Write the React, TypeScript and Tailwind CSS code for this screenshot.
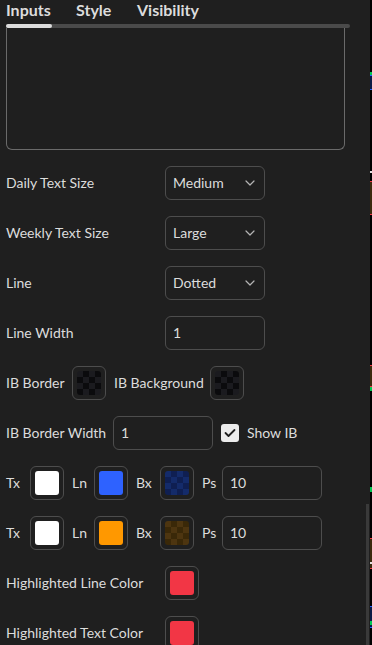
import React from 'react'

const font = { fontFamily: 'Lato, "Noto Sans", sans-serif' }

function Chevron() {
  return (
    <svg width="10" height="6" viewBox="0 0 10 6" fill="none" className="shrink-0">
      <polyline points="1,1 5,5 9,1" stroke="#b4b4b4" strokeWidth="1.2" strokeLinecap="round" strokeLinejoin="round" />
    </svg>
  )
}

function Select({ value }: { value: string }) {
  return (
    <div className="flex h-[34px] w-[100px] items-center justify-between rounded-md border border-[#4d4d4d] pl-[7px] pr-[9px] text-[14px] text-[#dcdcdc]">
      <span>{value}</span>
      <Chevron />
    </div>
  )
}

function TextInput({ value }: { value: string }) {
  return (
    <div className="flex h-[34px] w-[100px] shrink-0 items-center rounded-md border border-[#4d4d4d] pl-[7px] text-[14px] text-[#dcdcdc]">
      {value}
    </div>
  )
}

const SWATCH_FILL: Record<string, string> = {
  white: 'bg-white',
  blue: 'bg-[#2e62ff]',
  orange: 'bg-[#ff9800]',
  red: 'bg-[#f23645]',
  dark: 'bg-[conic-gradient(#0b0b0d_25%,#1b1b1f_0_50%,#0b0b0d_0_75%,#1b1b1f_0)] bg-[length:12px_12px]',
  navy: 'bg-[conic-gradient(#0f1f52_25%,#142b6a_0_50%,#0f1f52_0_75%,#142b6a_0)] bg-[length:12px_12px]',
  brown: 'bg-[conic-gradient(#3a2808_25%,#4d3510_0_50%,#3a2808_0_75%,#4d3510_0)] bg-[length:12px_12px]',
}

function Swatch({ fill }: { fill: string }) {
  return (
    <div className="flex h-[34px] w-[34px] shrink-0 items-center justify-center rounded-md border border-[#4d4d4d]">
      <div className={`h-6 w-6 rounded-[3px] ${SWATCH_FILL[fill]}`} />
    </div>
  )
}

function Label({ w, children }: { w: string; children: React.ReactNode }) {
  return <span className={`shrink-0 whitespace-nowrap ${w}`}>{children}</span>
}

function Row({ label, children }: { label: string; children: React.ReactNode }) {
  return (
    <div className="flex h-[34px] items-center">
      <Label w="w-[159px]">{label}</Label>
      {children}
    </div>
  )
}

function ColorRow({ box }: { box: { ln: string; bx: string } }) {
  return (
    <div className="flex h-[34px] items-center gap-2">
      <Label w="w-4">Tx</Label>
      <Swatch fill="white" />
      <Label w="w-[14px]">Ln</Label>
      <Swatch fill={box.ln} />
      <Label w="w-4">Bx</Label>
      <Swatch fill={box.bx} />
      <Label w="w-[12px]">Ps</Label>
      <TextInput value="10" />
    </div>
  )
}

// chart edge peeking out to the right of the panel
const EDGE_MARKS: { h: number; c: string }[] = [
  { h: 72, c: 'bg-black' },
  { h: 3, c: 'bg-[#00c853]' },
  { h: 1, c: 'bg-[#2962ff]' },
  { h: 13, c: 'bg-[#0c1a45]' },
  { h: 1, c: 'bg-[#2962ff]' },
  { h: 81, c: 'bg-black' },
  { h: 2, c: 'bg-[#e0e0e0]' },
  { h: 8, c: 'bg-black' },
  { h: 1, c: 'bg-[#f23645]' },
  { h: 32, c: 'bg-[#3b2a0e]' },
  { h: 1, c: 'bg-[#f23645]' },
  { h: 150, c: 'bg-black' },
  { h: 1, c: 'bg-[#f23645]' },
  { h: 20, c: 'bg-[#3b2a0e]' },
  { h: 1, c: 'bg-[#f23645]' },
  { h: 4, c: 'bg-[#00c853]' },
  { h: 96, c: 'bg-black' },
  { h: 5, c: 'bg-[#00c853]' },
  { h: 46, c: 'bg-black' },
  { h: 1, c: 'bg-[#f23645]' },
  { h: 23, c: 'bg-[#3b2a0e]' },
  { h: 2, c: 'bg-[#e0e0e0]' },
  { h: 4, c: 'bg-[#3b2a0e]' },
  { h: 1, c: 'bg-[#f23645]' },
  { h: 37, c: 'bg-black' },
  { h: 1, c: 'bg-[#2962ff]' },
  { h: 14, c: 'bg-[#0c1a45]' },
  { h: 4, c: 'bg-[#00c853]' },
  { h: 2, c: 'bg-[#0c1a45]' },
  { h: 1, c: 'bg-[#2962ff]' },
]

export default function App() {
  return (
    <div className="flex h-[645px] w-[372px] overflow-hidden bg-[#1f1f1f] text-[14px] leading-5 text-[#dcdcdc]" style={font}>
      <div className="w-[366px] shrink-0 pl-[6px]">
        <div className="flex h-6 gap-6 text-[16px] font-bold leading-5 text-[#dcdcdc]">
          <span className="w-[46px] whitespace-nowrap">Inputs</span>
          <span className="w-[37px] whitespace-nowrap">Style</span>
          <span className="whitespace-nowrap">Visibility</span>
        </div>
        <div className="flex h-1 w-[344px] rounded-full bg-[#4a4a4a]">
          <div className="w-[46px] rounded-full bg-[#dcdcdc]" />
        </div>
        <div className="h-[122px] w-[339px] rounded-b-md border border-t-0 border-[#6a6a6a]" />

        <div className="mt-4 flex flex-col gap-4">
          <Row label="Daily Text Size">
            <Select value="Medium" />
          </Row>
          <Row label="Weekly Text Size">
            <Select value="Large" />
          </Row>
          <Row label="Line">
            <Select value="Dotted" />
          </Row>
          <Row label="Line Width">
            <TextInput value="1" />
          </Row>

          <div className="flex h-[34px] items-center gap-2">
            <Label w="w-[58px]">IB Border</Label>
            <Swatch fill="dark" />
            <Label w="w-[88px]">IB Background</Label>
            <Swatch fill="dark" />
          </div>

          <div className="flex h-[34px] items-center gap-2">
            <Label w="w-[99px]">IB Border Width</Label>
            <TextInput value="1" />
            <div className="flex h-[18px] w-[18px] shrink-0 items-center justify-center rounded-[3px] bg-[#ececec]">
              <svg width="12" height="10" viewBox="0 0 12 10" fill="none">
                <polyline points="1.5,5 4.5,8 10.5,2" stroke="#1f1f1f" strokeWidth="1.8" strokeLinecap="round" strokeLinejoin="round" />
              </svg>
            </div>
            <span className="whitespace-nowrap">Show IB</span>
          </div>

          <ColorRow box={{ ln: 'blue', bx: 'navy' }} />
          <ColorRow box={{ ln: 'orange', bx: 'brown' }} />

          <Row label="Highlighted Line Color">
            <Swatch fill="red" />
          </Row>
          <Row label="Highlighted Text Color">
            <Swatch fill="red" />
          </Row>
        </div>
      </div>

      <div className="w-[3px] shrink-0 pt-[504px]">
        <div className="h-full bg-[#3a3a3a]" />
      </div>
      <div className="w-px shrink-0" />
      <div className="flex w-[2px] shrink-0 flex-col bg-black">
        {EDGE_MARKS.map((m, i) => (
          <div key={i} className={`shrink-0 ${m.c}`} style={{ height: m.h }} />
        ))}
      </div>
    </div>
  )
}
